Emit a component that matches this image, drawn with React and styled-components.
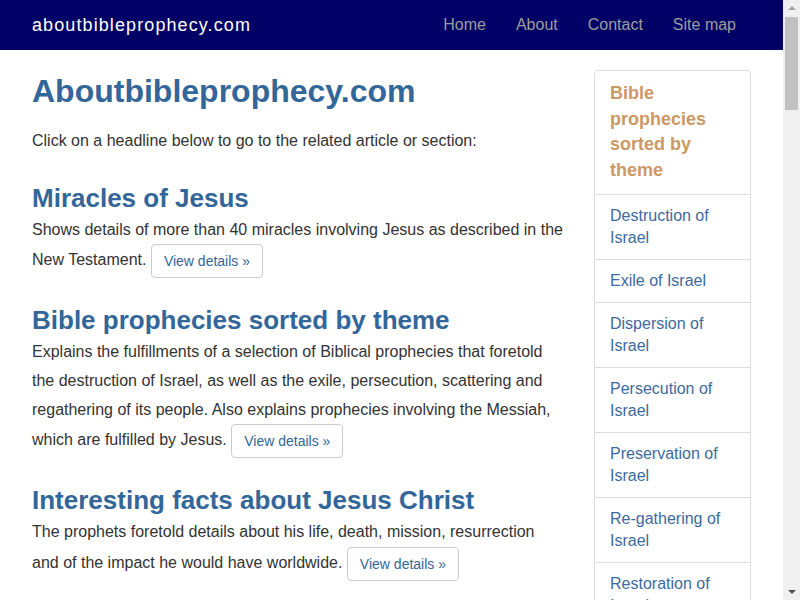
import styled, { createGlobalStyle } from "styled-components";

const sections = [
  {
    title: "Miracles of Jesus",
    text: "Shows details of more than 40 miracles involving Jesus as described in the New Testament.",
  },
  {
    title: "Bible prophecies sorted by theme",
    text: "Explains the fulfillments of a selection of Biblical prophecies that foretold the destruction of Israel, as well as the exile, persecution, scattering and regathering of its people. Also explains prophecies involving the Messiah, which are fulfilled by Jesus.",
  },
  {
    title: "Interesting facts about Jesus Christ",
    text: "The prophets foretold details about his life, death, mission, resurrection and of the impact he would have worldwide.",
  },
];

const themes = [
  "Destruction of Israel",
  "Exile of Israel",
  "Dispersion of Israel",
  "Persecution of Israel",
  "Preservation of Israel",
  "Re-gathering of Israel",
  "Restoration of Israel",
];

const App = () => {
  return (
    <>
      <GlobalStyles />
      <Navbar>
        <Brand href="#">aboutbibleprophecy.com</Brand>
        <NavLinks>
          <NavLink href="#">Home</NavLink>
          <NavLink href="#">About</NavLink>
          <NavLink href="#">Contact</NavLink>
          <NavLink href="#">Site map</NavLink>
        </NavLinks>
      </Navbar>
      <Page>
        <Main>
          <Title>Aboutbibleprophecy.com</Title>
          <Intro>Click on a headline below to go to the related article or section:</Intro>
          {sections.map((s) => (
            <Section key={s.title}>
              <SectionTitle>{s.title}</SectionTitle>
              <Text>
                {s.text} <DetailsButton href="#">View details &raquo;</DetailsButton>
              </Text>
            </Section>
          ))}
        </Main>
        <Sidebar>
          <Panel>
            <PanelHeading>Bible prophecies sorted by theme</PanelHeading>
            {themes.map((t) => (
              <PanelItem key={t} href="#">
                {t}
              </PanelItem>
            ))}
          </Panel>
        </Sidebar>
      </Page>
      <ScrollBar>
        <Arrow $up />
        <Thumb />
        <Arrow />
      </ScrollBar>
    </>
  );
};

//Styling Area
const GlobalStyles = createGlobalStyle`
  body {
    margin: 0;
    padding-right: 17px;
    font-family: "Liberation Sans", Arial, sans-serif;
    font-size: 16px;
    color: #333;
    background: #fff;
  }
`;

const Navbar = styled.nav`
  display: flex;
  align-items: center;
  justify-content: space-between;
  height: 50px;
  padding: 0 17px 0 32px;
  background: #000066;
`;

const Brand = styled.a`
  color: #fff;
  font-size: 18px;
  letter-spacing: 1.1px;
  text-decoration: none;
`;

const NavLinks = styled.div`
  display: flex;
  margin-right: 15px;
`;

const NavLink = styled.a`
  padding: 0 15px;
  color: #9d9d9d;
  font-size: 16px;
  line-height: 50px;
  text-decoration: none;
`;

const Page = styled.div`
  display: grid;
  grid-template-columns: 1fr 157px;
  gap: 30px;
  padding: 20px 32px 40px;
  align-items: start;
`;

const Main = styled.main`
  min-width: 0;
`;

const Title = styled.h1`
  margin: 4px 0 0;
  font-size: 32px;
  line-height: 1.1;
  font-weight: bold;
  color: #336699;
`;

const Intro = styled.p`
  margin: 18px 0 0;
  line-height: 1.8;
`;

const Section = styled.section`
  margin-top: 28px;
`;

const SectionTitle = styled.h2`
  margin: 0 0 3px;
  font-size: 26px;
  line-height: 1.1;
  font-weight: bold;
  color: #336699;
`;

const Text = styled.p`
  margin: 0;
  line-height: 1.8;
`;

const DetailsButton = styled.a`
  display: inline-block;
  padding: 6px 12px;
  border: 1px solid #ccc;
  border-radius: 4px;
  font-size: 14px;
  line-height: 20px;
  color: #336699;
  text-decoration: none;
  vertical-align: middle;
  background: #fff;
`;

const Sidebar = styled.aside``;

const Panel = styled.div`
  display: flex;
  flex-direction: column;
  border: 1px solid #ddd;
  border-radius: 4px;
`;

const PanelHeading = styled.div`
  padding: 10px 15px;
  font-size: 18px;
  line-height: 25.7px;
  font-weight: bold;
  color: #cc9966;
`;

const PanelItem = styled.a`
  padding: 10px 15px;
  border-top: 1px solid #ddd;
  font-size: 16px;
  line-height: 22px;
  color: #3d6a9e;
  text-decoration: none;
`;

const ScrollBar = styled.div`
  position: fixed;
  top: 0;
  right: 0;
  width: 17px;
  height: 100vh;
  display: flex;
  flex-direction: column;
  background: #f0f0f0;
`;

const Arrow = styled.div`
  flex: 0 0 17px;
  position: relative;
  &::after {
    content: "";
    position: absolute;
    left: 5px;
    top: ${(p) => (p.$up ? "6px" : "7px")};
    border-left: 4px solid transparent;
    border-right: 4px solid transparent;
    ${(p) =>
      p.$up
        ? "border-bottom: 4px solid #a3a3a3;"
        : "border-top: 4px solid #505050;"}
  }
  &:last-child {
    margin-top: auto;
  }
`;

const Thumb = styled.div`
  height: 93px;
  margin: 0 2px;
  background: #c1c1c1;
`;

export default App;
